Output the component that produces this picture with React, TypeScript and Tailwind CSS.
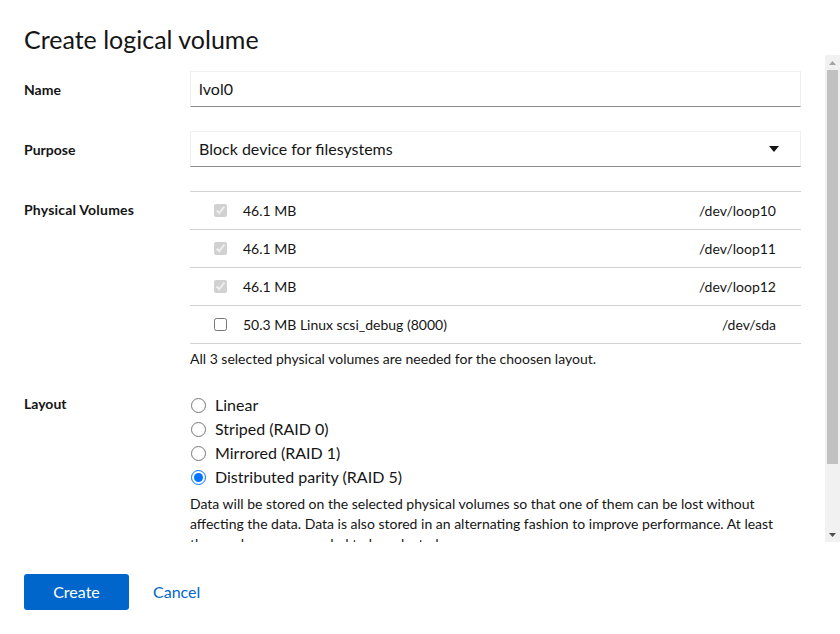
import React from "react";

const rows = [
  { size: "46.1 MB", dev: "/dev/loop10", checked: true, disabled: true },
  { size: "46.1 MB", dev: "/dev/loop11", checked: true, disabled: true },
  { size: "46.1 MB", dev: "/dev/loop12", checked: true, disabled: true },
  { size: "50.3 MB Linux scsi_debug (8000)", dev: "/dev/sda", checked: false, disabled: false },
];

const layouts = [
  "Linear",
  "Striped (RAID 0)",
  "Mirrored (RAID 1)",
  "Distributed parity (RAID 5)",
];

export default function App() {
  return (
    <div className="w-[840px] h-[634px] flex flex-col bg-white text-[#151515] font-['Lato','Liberation_Sans',sans-serif] overflow-hidden">
      <h1 className="px-6 pt-6 text-[25px] leading-[31px] font-normal">Create logical volume</h1>
      <div className="h-[487px] flex">
        <div className="flex-1 overflow-hidden px-6">
          <div className="pt-4 grid grid-cols-[150px_1fr] gap-x-4 gap-y-6">
            <div className="text-[14px] font-bold self-center">Name</div>
            <div className="h-9 flex items-center pl-2 border border-[#f0f0f0] border-b-[#8a8d90] text-[16px]">
              lvol0
            </div>

            <div className="text-[14px] font-bold self-center">Purpose</div>
            <div className="h-9 flex items-center justify-between pl-2 pr-[21px] border border-[#f0f0f0] border-b-[#8a8d90] text-[16px]">
              <span>Block device for filesystems</span>
              <svg width="10" height="6" viewBox="0 0 10 6">
                <polygon points="0,0 10,0 5,6" fill="#151515" />
              </svg>
            </div>

            <div className="text-[14px] font-bold pt-[9px] leading-[20px] tracking-[0.2px]">Physical Volumes</div>
            <div>
              <div className="border-t border-[#d2d2d2]">
                {rows.map((r) => (
                  <div
                    key={r.dev}
                    className="h-[38px] border-b border-[#d2d2d2] flex items-center pl-6 pr-[25px] text-[14px]"
                  >
                    <input
                      type="checkbox"
                      defaultChecked={r.checked}
                      disabled={r.disabled}
                      className="w-[13px] h-[13px]"
                    />
                    <span className="ml-4 flex-1">{r.size}</span>
                    <span>{r.dev}</span>
                  </div>
                ))}
              </div>
              <div className="mt-1 text-[14px] leading-[21px]">
                All 3 selected physical volumes are needed for the choosen layout.
              </div>
            </div>

            <div className="text-[14px] font-bold pt-[1px] leading-[20px]">Layout</div>
            <div>
              {layouts.map((l, i) => (
                <label key={l} className="flex items-center h-6 text-[16px]">
                  <input
                    type="radio"
                    name="layout"
                    defaultChecked={i === 3}
                    className="w-[15px] h-[15px] ml-[1px]"
                  />
                  <span className="ml-[9px]">{l}</span>
                </label>
              ))}
              <div className="mt-[5px] text-[14px] leading-[20px]">
                <div>Data will be stored on the selected physical volumes so that one of them can be lost without</div>
                <div>affecting the data. Data is also stored in an alternating fashion to improve performance. At least</div>
                <div>three volumes are needed to be selected.</div>
              </div>
            </div>
          </div>
        </div>
        <div className="w-[15px] bg-[#f1f1f1] flex flex-col">
          <div className="h-[15px] flex items-center justify-center">
            <svg width="7" height="4" viewBox="0 0 7 4">
              <polygon points="0,4 7,4 3.5,0" fill="#a3a3a3" />
            </svg>
          </div>
          <div className="mx-[2px] h-[394px] bg-[#c1c1c1]" />
          <div className="flex-1" />
          <div className="h-[15px] flex items-center justify-center">
            <svg width="7" height="4" viewBox="0 0 7 4">
              <polygon points="0,0 7,0 3.5,4" fill="#505050" />
            </svg>
          </div>
        </div>
      </div>
      <div className="px-6 pt-8 flex items-center gap-6">
        <button className="w-[105px] h-9 rounded-[3px] bg-[#0066cc] text-white text-[16px]">Create</button>
        <button className="text-[#0066cc] text-[16px]">Cancel</button>
      </div>
    </div>
  );
}
